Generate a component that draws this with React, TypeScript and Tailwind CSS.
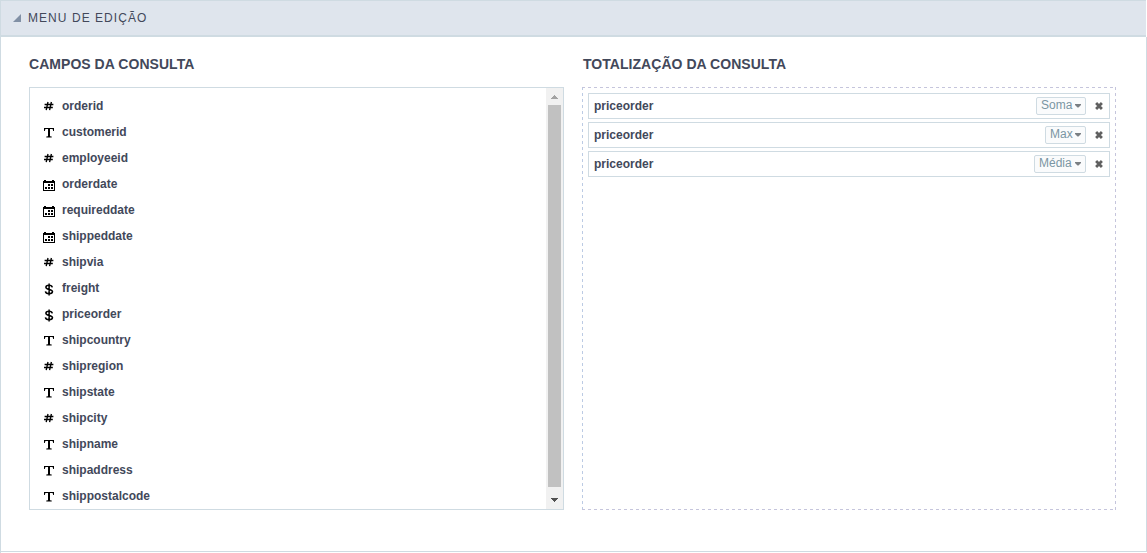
import React from "react";

type Kind = "number" | "text" | "date" | "money";

const fields: { name: string; kind: Kind }[] = [
  { name: "orderid", kind: "number" },
  { name: "customerid", kind: "text" },
  { name: "employeeid", kind: "number" },
  { name: "orderdate", kind: "date" },
  { name: "requireddate", kind: "date" },
  { name: "shippeddate", kind: "date" },
  { name: "shipvia", kind: "number" },
  { name: "freight", kind: "money" },
  { name: "priceorder", kind: "money" },
  { name: "shipcountry", kind: "text" },
  { name: "shipregion", kind: "number" },
  { name: "shipstate", kind: "text" },
  { name: "shipcity", kind: "number" },
  { name: "shipname", kind: "text" },
  { name: "shipaddress", kind: "text" },
  { name: "shippostalcode", kind: "text" },
];

const totals = [
  { field: "priceorder", fn: "Soma", width: "w-[50px]" },
  { field: "priceorder", fn: "Max", width: "w-[41px]" },
  { field: "priceorder", fn: "Média", width: "w-[52px]" },
];

function FieldIcon({ kind }: { kind: Kind }) {
  return (
    <svg width="14" height="26" viewBox="0 0 14 26" className="shrink-0" fill="none">
      {kind === "number" && (
        <path d="M6 9 4.2 17.2M9.4 9 7.6 17.2M2.6 11.5H11.4M2 14.5H10.8" stroke="#000" strokeWidth="1.35" />
      )}
      {kind === "text" && (
        <path d="M2 9H12V12H11.2L10.6 10H8V17.2L9.7 17.6V18.4H4.3V17.6L6 17.2V10H3.4L2.8 12H2Z" fill="#000" />
      )}
      {kind === "date" && (
        <g fill="#000" shapeRendering="crispEdges">
          <path fillRule="evenodd" d="M1 10H13V20H1ZM2 12V19H12V12Z" />
          <path d="M2 9h2v1H2zM10 9h2v1h-2zM6 13h2v2H6zM9 13h2v2H9zM3 16h2v2H3zM6 16h2v2H6zM9 16h2v2H9z" />
        </g>
      )}
      {kind === "money" && (
        <path
          d="M10.3 12.3C10 10.9 8.8 10.3 7 10.3C5 10.3 3.9 11.1 3.9 12.3C3.9 15.2 10.5 13.7 10.5 16.6C10.5 18 9.1 18.7 7.1 18.7C5 18.7 3.6 17.9 3.4 16.4M7.1 8.6V20.6"
          stroke="#000"
          strokeWidth="1.5"
        />
      )}
    </svg>
  );
}

function Scrollbar() {
  return (
    <div className="flex h-full w-[17px] shrink-0 flex-col items-center bg-[#f1f1f1]">
      <svg width="17" height="17" viewBox="0 0 17 17" shapeRendering="crispEdges">
        <path d="M8 7h1v1h1v1h1v1h1v1H5v-1h1V9h1V8h1z" fill="#a3a3a3" />
      </svg>
      <div className="h-[382px] w-[13px] bg-[#c1c1c1]" />
      <svg width="17" height="22" viewBox="0 0 17 22" shapeRendering="crispEdges">
        <path d="M5 11h7v1h-1v1h-1v1H9v1H8v-1H7v-1H6v-1H5z" fill="#505050" />
      </svg>
    </div>
  );
}

export default function App() {
  return (
    <div className="h-[553px] w-[1147px] overflow-hidden border-l border-[#cfdbe2] bg-white font-['Liberation_Sans',Arial,sans-serif] text-[#42485a]">
      <header className="flex h-[37px] w-[1145px] items-center border-t border-b-2 border-[#cfdbe2] bg-[#dfe5ed] pl-3">
        <svg width="8" height="8" viewBox="0 0 8 8" className="mr-[7px]">
          <path d="M8 0V8H0Z" fill="#8190a5" />
        </svg>
        <span className="text-[12px] leading-[16px] tracking-[1.05px]">MENU DE EDIÇÃO</span>
      </header>
      <main className="flex h-[515px] gap-[18px] border-r border-b border-[#cfdbe2] pl-7">
        <section className="w-[535px]">
          <h2 className="mt-[18px] h-[32px] text-[14px] leading-[18px] font-bold tracking-[0.04px]">CAMPOS DA CONSULTA</h2>
          <div className="flex h-[423px] overflow-hidden border border-[#cfdbe2]">
            <ul className="flex-1 pt-[5px] pl-3">
              {fields.map((f) => (
                <li key={f.name} className="flex h-[26px] items-center gap-[6px]">
                  <FieldIcon kind={f.kind} />
                  <span className="text-[12px] leading-[16px] font-bold">{f.name}</span>
                </li>
              ))}
            </ul>
            <Scrollbar />
          </div>
        </section>
        <section className="w-[534px]">
          <h2 className="mt-[18px] h-[32px] pl-px text-[14px] leading-[18px] font-bold tracking-[0.04px]">TOTALIZAÇÃO DA CONSULTA</h2>
          <div className="flex h-[423px] flex-col gap-[3px] bg-[image:repeating-linear-gradient(90deg,#c5c5dc_0_3px,transparent_3px_6px),repeating-linear-gradient(90deg,#c5c5dc_0_3px,transparent_3px_6px),repeating-linear-gradient(180deg,#bccbe4_0_3px,transparent_3px_6px),repeating-linear-gradient(180deg,#c5c5dc_0_3px,transparent_3px_6px)] bg-[size:100%_1px,100%_1px,1px_100%,1px_100%] bg-[position:0_0,0_100%,0_0,100%_0] bg-no-repeat p-[6px]">
            {totals.map((t) => (
              <div key={t.fn} className="flex h-[26px] shrink-0 items-center border border-[#cfdbe2] pr-[6px] pl-[5px]">
                <span className="flex-1 text-[12px] leading-[16px] font-bold">{t.field}</span>
                <button
                  className={`flex h-[18px] items-center justify-between rounded-[2px] border border-[#cfdbe2] bg-[#fafbfc] px-1 ${t.width}`}
                >
                  <span className="pb-[2px] text-[12px] leading-[14px] text-[#7a96a3]">{t.fn}</span>
                  <svg width="6" height="4" viewBox="0 0 6 4">
                    <path d="M0 0H6V1L3.5 3.5H2.5L0 1Z" fill="#7a7f83" />
                  </svg>
                </button>
                <svg width="8" height="8" viewBox="0 0 8 8" className="ml-[9px]">
                  <path d="M1.1 1.1 6.9 6.9M6.9 1.1 1.1 6.9" stroke="#606060" strokeWidth="2.8" />
                </svg>
              </div>
            ))}
          </div>
        </section>
      </main>
    </div>
  );
}
